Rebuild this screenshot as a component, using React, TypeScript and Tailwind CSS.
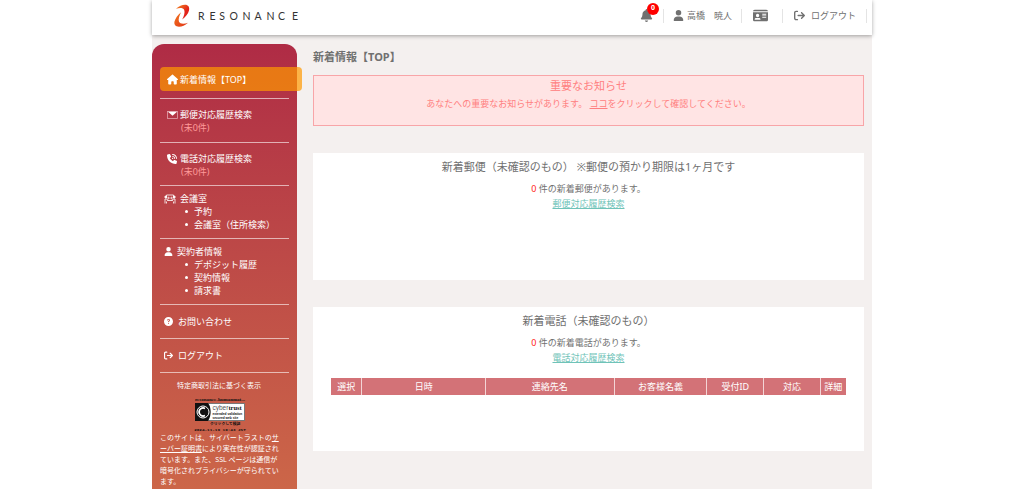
import type { ReactNode } from "react";
import {
  FaArrowRightFromBracket,
  FaBell,
  FaCircleQuestion,
  FaHouse,
  FaIdCard,
  FaPhoneVolume,
  FaUser,
} from "react-icons/fa6";

function Logo() {
  return (
    <a href="#top" aria-label="RESONANCE" className="flex items-center">
      <svg viewBox="0 0 130 24" className="h-6 w-[130px]">
        <defs>
          <linearGradient id="upper" x1="0" y1="0" x2="1" y2="1">
            <stop offset="0" stopColor="#f58a1f" />
            <stop offset=".6" stopColor="#e2231a" />
          </linearGradient>
          <linearGradient id="lower" x1="0" y1="0" x2="1" y2="1">
            <stop offset=".2" stopColor="#ee6a1c" />
            <stop offset="1" stopColor="#e2331a" />
          </linearGradient>
        </defs>
        <path
          d="M3 4.800C6 2.200 9 .8 12 .8C15.300 .8 16.800 3.200 16 6.400C15.200 9.800 12.600 12.600 9.200 15.600C10.900 12 12.200 8.600 11.200 6C10.200 3.600 6.500 3.600 3 4.800Z"
          fill="url(#upper)"
        />
        <path
          d="M15 18.800C12 21.400 9 22.800 6 22.800C2.700 22.800 .8 20.800 1.500 17.600C2.300 14.200 4.600 11.200 8 8.200C6.300 11.800 5 15.200 6 17.800C7 20.200 11.500 20 15 18.800Z"
          fill="url(#lower)"
        />
        <text
          x="25 36.500 46.300 56.400 69.400 81.600 93.400 105 119"
          y="16.300"
          fontFamily="Lato, sans-serif"
          fontSize="10.500"
          fill="#333"
        >
          RESONANCE
        </text>
      </svg>
    </a>
  );
}

function MailIcon() {
  return (
    <svg viewBox="0 0 11 8" className="h-2 w-[11px]">
      <rect x=".5" y=".5" width="10" height="7" fill="none" stroke="#e3a5ae" strokeWidth=".8" />
      <path d="M1 .8H10L5.500 4.800Z" fill="#fff" />
    </svg>
  );
}

function MeetingIcon() {
  return (
    <svg viewBox="0 0 24 20" className="h-2.5 w-3" fill="none" stroke="#fff" strokeWidth="1.600">
      <path d="M5 8V2H19V8" />
      <circle cx="3.500" cy="6" r="2" fill="#fff" />
      <circle cx="20.500" cy="6" r="2" fill="#fff" />
      <circle cx="9" cy="8" r="1.500" />
      <circle cx="15" cy="8" r="1.500" />
      <path d="M2 19V10H6L8 14M22 19V10H18L16 14M7 13H17M5 19V15M19 19V15" />
    </svg>
  );
}

function Seal() {
  return (
    <svg viewBox="0 0 56 36" className="mx-auto h-9 w-14" fontFamily="'Liberation Sans', 'Noto Sans CJK JP', sans-serif">
      <text x="28" y="5" textAnchor="middle" fontSize="5" fontFamily="'Liberation Serif', serif" fontWeight="bold" fill="#111">
        resonance-humanmat...
      </text>
      <rect x="3.500" y="7.500" width="49" height="17" fill="#fff" stroke="#777" />
      <path d="M3 7H16C19.500 11 19.500 20 16 25H3Z" fill="#111" />
      <circle cx="11" cy="16" r="6" fill="#111" stroke="#fff" />
      <path d="M13 12.500A4 4 0 1 0 13 19.500" fill="none" stroke="#fff" strokeWidth="1.800" />
      <text x="20.500" y="14" fontSize="6.500" fill="#555">
        cyber<tspan fill="#111" fontWeight="bold" fontFamily="'Liberation Serif', serif">trust</tspan>
      </text>
      <text x="20.500" y="18.500" fontSize="3.200" fontWeight="bold" fill="#111">extended validation</text>
      <text x="20.500" y="22.500" fontSize="3.200" fontWeight="bold" fill="#111">secured web site</text>
      <text x="18" y="29.300" fontSize="3.800" fontWeight="bold" fill="#111">クリックして検証</text>
      <text x="28" y="34.500" textAnchor="middle" fontSize="4.300" fontWeight="bold" fontFamily="'Liberation Mono', monospace" fill="#111">
        2024-11-19 10:43 JST
      </text>
    </svg>
  );
}

function MenuLink({ icon, children }: { icon: ReactNode; children: ReactNode }) {
  return (
    <a href="#menu" className="flex items-center gap-px">
      <span className="flex w-3 shrink-0">{icon}</span>
      {children}
    </a>
  );
}

function SubMenu({ items }: { items: string[] }) {
  return (
    <ul className="pl-[21px]">
      {items.map((item) => (
        <li
          key={item}
          className="flex items-center gap-1.5 before:size-[3px] before:rounded-full before:bg-white before:content-['']"
        >
          <a href="#menu">{item}</a>
        </li>
      ))}
    </ul>
  );
}

function Sidebar() {
  return (
    <aside className="w-[145px] shrink-0 rounded-t-xl bg-linear-to-b from-[#af2b45] to-[#cc6648] px-2 pt-[23px] text-[9px] leading-[13px] text-white">
      <nav className="divide-y divide-white/60">
        <div className="pb-[7px]">
          <a href="#top" className="-mr-[13px] flex h-6 items-center gap-0.5 rounded bg-[#ff9800]/70 pl-[7px]">
            <FaHouse className="size-[11px]" />
            新着情報【TOP】
          </a>
        </div>
        <div className="pt-[9px] pb-2 pl-[7px]">
          <MenuLink icon={<MailIcon />}>郵便対応履歴検索</MenuLink>
          <p className="pl-3.5 text-[#ff9a9a]">(未0件)</p>
        </div>
        <div className="pt-[9px] pb-[7px] pl-[7px]">
          <MenuLink icon={<FaPhoneVolume className="size-2.5" />}>電話対応履歴検索</MenuLink>
          <p className="pl-3.5 text-[#ff9a9a]">(未0件)</p>
        </div>
        <div className="pt-1.5 pb-[7px] pl-1">
          <MenuLink icon={<MeetingIcon />}>
            <span className="pl-[3px]">会議室</span>
          </MenuLink>
          <SubMenu items={["予約", "会議室（住所検索）"]} />
        </div>
        <div className="pt-1.5 pb-[7px] pl-1">
          <MenuLink icon={<FaUser className="size-[9px]" />}>契約者情報</MenuLink>
          <SubMenu items={["デポジット履歴", "契約情報", "請求書"]} />
        </div>
        <div className="py-2.5 pl-1">
          <MenuLink icon={<FaCircleQuestion className="size-[9px]" />}>
            <span className="pl-px">お問い合わせ</span>
          </MenuLink>
        </div>
        <div className="py-2.5 pl-1">
          <MenuLink icon={<FaArrowRightFromBracket className="size-[9px]" />}>
            <span className="pl-px">ログアウト</span>
          </MenuLink>
        </div>
        <div className="pt-1.5 text-[7px]">
          <a href="#law" className="block pl-[17px]">
            特定商取引法に基づく表示
          </a>
          <div className="-ml-2.5 pt-1">
            <Seal />
          </div>
          <p className="mr-2.5 leading-[11px]">
            このサイトは、サイバートラストの
            <a href="#cert" className="underline">
              サーバー証明書
            </a>
            により実在性が認証されています。また、SSL ページは通信が暗号化されプライバシーが守られています。
          </p>
        </div>
      </nav>
    </aside>
  );
}

function Header() {
  return (
    <header className="relative flex h-[35px] items-center justify-between bg-white pr-[5px] pl-[21px] shadow-[0_1px_4px_rgba(0,0,0,0.35)]">
      <div className="-mt-1">
        <Logo />
      </div>
      <div className="-mt-1 flex h-3.5 items-center text-[9px] text-[#707070] *:h-full *:border-r *:border-[#e4e4e4]">
        <a href="#notice" aria-label="お知らせ" className="relative flex items-center pr-2.5">
          <FaBell className="size-[13px]" />
          <span className="absolute -top-1.5 left-[7px] flex size-3 items-center justify-center rounded-full bg-[#ff0000] text-[7px] font-bold text-white">
            0
          </span>
        </a>
        <a href="#user" className="flex items-center gap-[3px] px-[9px]">
          <FaUser className="size-[11px]" />
          高橋　暁人
        </a>
        <a href="#card" aria-label="会員証" className="flex items-center pr-3.5 pl-[11px]">
          <FaIdCard className="size-[15px]" />
        </a>
        <a href="#logout" className="flex items-center gap-1.5 pr-2.5 pl-[11px]">
          <FaArrowRightFromBracket className="size-[11px]" />
          ログアウト
        </a>
      </div>
    </header>
  );
}

function Card({ title, text, link, children }: { title: string; text: string; link: string; children?: ReactNode }) {
  return (
    <section className="mb-[27px] bg-white px-[18px] pt-1.5 text-center">
      <h2 className="text-[11px] leading-4">{title}</h2>
      <p className="pt-1.5 text-[9px] leading-[15px]">
        <span className="text-[#ff2020]">0</span> {text}
      </p>
      <a href="#search" className="block text-[9px] leading-[15px] text-[#6fc3b8] underline">
        {link}
      </a>
      {children}
    </section>
  );
}

const columns = [
  { label: "選択", width: "w-[6%]" },
  { label: "日時", width: "w-[24%]" },
  { label: "連絡先名", width: "w-[25%]" },
  { label: "お客様名義", width: "w-[18%]" },
  { label: "受付ID", width: "w-[11%]" },
  { label: "対応", width: "w-[11%]" },
  { label: "詳細", width: "w-[5%]" },
];

export default function App() {
  return (
    <div className="min-h-screen bg-white font-['Noto_Sans','Noto_Sans_CJK_JP',sans-serif] text-[#707070]" lang="ja">
      <div className="mx-auto flex min-h-screen max-w-[720px] flex-col bg-[#f4f0ef]">
        <Header />
        <div className="flex grow gap-4 pt-[9px] pr-2">
          <Sidebar />
          <main className="min-w-0 grow pt-[5px]">
            <h1 className="text-[11px] leading-4 font-bold">新着情報【TOP】</h1>
            <section className="mt-2.5 mb-[27px] border border-[#f8a5a8] bg-[#ffe4e4] pt-0.5 pb-3.5 text-center text-[#ff8080]">
              <h2 className="text-[11px] leading-4">重要なお知らせ</h2>
              <p className="pt-0.5 text-[9px] leading-[15px]">
                あなたへの重要なお知らせがあります。{" "}
                <a href="#important" className="underline">
                  ココ
                </a>
                をクリックして確認してください。
              </p>
            </section>
            <Card
              title="新着郵便（未確認のもの） ※郵便の預かり期限は1ヶ月です"
              text="件の新着郵便があります。"
              link="郵便対応履歴検索"
            >
              <div className="h-[69px]" />
            </Card>
            <Card title="新着電話（未確認のもの）" text="件の新着電話があります。" link="電話対応履歴検索">
              <div className="pt-[13px] pb-14">
                <table className="w-full table-fixed text-[9px] leading-[17px] text-white">
                  <thead>
                    <tr className="bg-[#d37277]">
                      {columns.map((column) => (
                        <th
                          key={column.label}
                          scope="col"
                          className={`${column.width} border-r border-[#f3d5d6] p-0 font-normal whitespace-nowrap last:border-r-0`}
                        >
                          {column.label}
                        </th>
                      ))}
                    </tr>
                  </thead>
                </table>
              </div>
            </Card>
          </main>
        </div>
      </div>
    </div>
  );
}
